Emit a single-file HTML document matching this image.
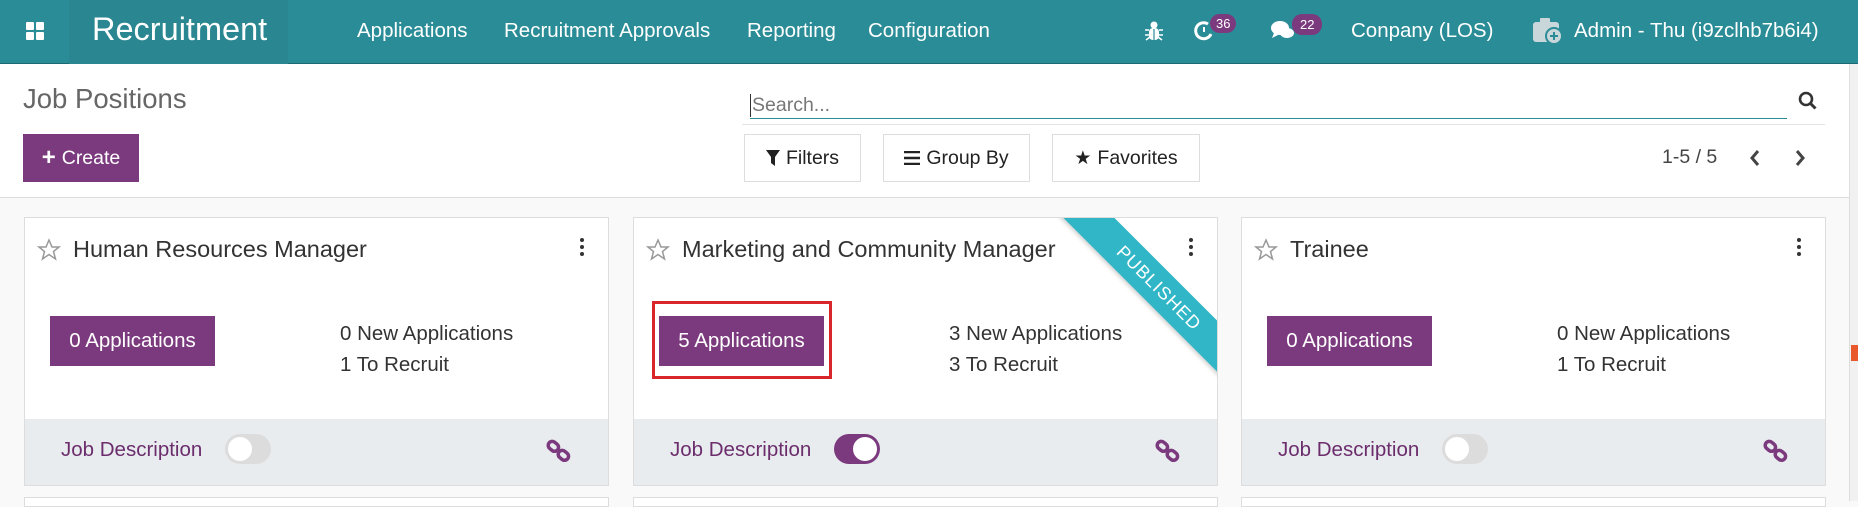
<!DOCTYPE html>
<html><head><meta charset="utf-8"><style>
*{box-sizing:border-box;margin:0;padding:0}
body{width:1858px;height:501px;overflow:hidden;background:#f9f9f9;font-family:"Liberation Sans",sans-serif;position:relative;color:#4c4c4c}
.abs{position:absolute}
.nav{left:0;top:0;width:1858px;height:64px;background:#2a8c96;border-bottom:1px solid #1f6a72}
.nav .t{color:#fff;font-size:20.5px;top:19px;white-space:nowrap}
.cp{left:0;top:64px;width:1849px;height:134px;background:#fff;border-bottom:1px solid #ddd}
.btn{border:1px solid #ddd;background:#fff;height:48px;top:134px;font-size:19.5px;color:#222;display:flex;align-items:center;justify-content:center;gap:6px}
.card{background:#fff;border:1px solid #ddd;top:217px;width:585px;height:269px;overflow:hidden}
.card .foot{position:absolute;left:0;bottom:0;width:100%;height:66px;background:#e9ecef}
.title{position:absolute;left:48px;top:18px;font-size:23.5px;color:#333;white-space:nowrap}
.star{position:absolute;left:12px;top:20px}
.kb{position:absolute;right:24px;top:20px;width:4px}
.kb i{display:block;width:4px;height:4px;background:#333;border-radius:2px;margin-bottom:3px}
.apps{position:absolute;left:25px;top:98px;width:165px;height:50px;background:#7c3a7e;color:#fff;font-size:20.5px;display:flex;align-items:center;justify-content:center}
.stat{position:absolute;left:315px;top:100px;font-size:20.5px;color:#333;line-height:31px}
.jd{position:absolute;left:36px;top:19px;font-size:20.5px;color:#6b2d6c}
.tg{position:absolute;left:200px;top:15px;width:46px;height:30px;border-radius:15px;background:#dcdcdc}
.tg i{position:absolute;left:3px;top:3px;width:24px;height:24px;border-radius:12px;background:#fff}
.tg.on{background:#7c3a7e}.tg.on i{left:19px}
.lk{position:absolute;right:36px;top:20px}
.badge{background:#7c3a7e;color:#fff;font-size:13px;border-radius:10px;padding:2px 6px}
</style></head><body>
<div class="abs nav">
  <div class="abs" style="left:26px;top:22px;width:18px;height:18px;display:grid;grid-template-columns:8px 8px;gap:2px"><i style="background:#fff;border-radius:1px"></i><i style="background:#fff;border-radius:1px"></i><i style="background:#fff;border-radius:1px"></i><i style="background:#fff;border-radius:1px"></i></div>
  <div class="abs" style="left:69px;top:0;width:219px;height:64px;background:#2a8690"></div>
  <div class="abs t" style="left:92px;top:11px;font-size:32.5px">Recruitment</div>
  <div class="abs t" style="left:357px">Applications</div>
  <div class="abs t" style="left:504px">Recruitment Approvals</div>
  <div class="abs t" style="left:747px">Reporting</div>
  <div class="abs t" style="left:868px">Configuration</div>
  <svg class="abs" style="left:1144px;top:20px" width="20" height="22" viewBox="0 0 20 22"><circle cx="10" cy="5" r="3.5" fill="#fff"/><rect x="5" y="8" width="10" height="12" rx="4" fill="#fff"/><path d="M1 10h4M15 10h4M1 15h4M15 15h4M2 20l4-3M18 20l-4-3" stroke="#fff" stroke-width="1.6"/><path d="M10 9v11" stroke="#2a8c96" stroke-width="1.2"/></svg>
  <svg class="abs" style="left:1193px;top:20px" width="22" height="22" viewBox="0 0 22 22"><path d="M15 4A8 8 0 1 0 18 14" stroke="#fff" stroke-width="3" fill="none"/><path d="M11 7v5" stroke="#fff" stroke-width="2"/></svg>
  <span class="abs badge" style="left:1210px;top:14px">36</span>
  <svg class="abs" style="left:1270px;top:19px" width="26" height="24" viewBox="0 0 26 24"><ellipse cx="10" cy="9" rx="9" ry="7" fill="#fff"/><path d="M4 14l-2 5 6-3z" fill="#fff"/><ellipse cx="17" cy="14" rx="7" ry="5" fill="#fff"/></svg>
  <span class="abs badge" style="left:1292px;top:14px;padding:3px 8px">22</span>
  <div class="abs t" style="left:1351px">Conpany (LOS)</div>
  <svg class="abs" style="left:1532px;top:16px" width="32" height="30" viewBox="0 0 32 30"><rect x="1" y="6" width="26" height="20" rx="3" fill="#c9d7da"/><rect x="8" y="2" width="10" height="6" rx="1" fill="#c9d7da"/><circle cx="22" cy="20" r="8" fill="#c9d7da" stroke="#2a8c96" stroke-width="2"/><path d="M22 16v8M18 20h8" stroke="#2a8c96" stroke-width="2"/></svg>
  <div class="abs t" style="left:1574px">Admin - Thu (i9zclhb7b6i4)</div>
</div>
<div class="abs cp">
  <div class="abs" style="left:23px;top:19px;font-size:27.5px;color:#666">Job Positions</div>
  <div class="abs" style="left:750px;top:30px;font-size:19.5px;color:#777;border-left:1px solid #333;padding-left:1px">Search...</div>
  <div class="abs" style="left:750px;top:54px;width:1037px;height:1px;background:#2a8c96"></div>
  <div class="abs" style="left:742px;top:60px;width:1083px;height:1px;background:#e4e4e4"></div>
  <svg class="abs" style="left:1798px;top:27px" width="20" height="20" viewBox="0 0 20 20"><circle cx="8" cy="8" r="6" stroke="#333" stroke-width="2.6" fill="none"/><path d="M12.5 12.5l5 5" stroke="#333" stroke-width="3"/></svg>
  <div class="abs" style="left:1662px;top:82px;font-size:19.5px;color:#444">1-5 / 5</div>
  <svg class="abs" style="left:1748px;top:84px" width="14" height="20" viewBox="0 0 14 20"><path d="M10 3L4 10l6 7" stroke="#444" stroke-width="3" fill="none"/></svg>
  <svg class="abs" style="left:1793px;top:84px" width="14" height="20" viewBox="0 0 14 20"><path d="M4 3l6 7-6 7" stroke="#444" stroke-width="3" fill="none"/></svg>
</div>
<div class="abs" style="left:1849px;top:64px;width:9px;height:437px;background:#f1f1f1;border-left:1px solid #ddd"></div>
<div class="abs" style="left:1851px;top:345px;width:7px;height:16px;background:#e8582a"></div>
<div class="abs btn" style="left:23px;width:116px;background:#7c3a7e;border-color:#7c3a7e;color:#fff"><b style="font-size:24px">+</b>Create</div>
<div class="abs btn" style="left:744px;width:117px"><svg width="14" height="16" viewBox="0 0 14 16"><path d="M0 0h14L9 7v9L5 13V7z" fill="#222"/></svg>Filters</div>
<div class="abs btn" style="left:883px;width:147px"><svg width="16" height="14" viewBox="0 0 16 14"><path d="M0 1h16M0 7h16M0 13h16" stroke="#222" stroke-width="2.4"/></svg>Group By</div>
<div class="abs btn" style="left:1052px;width:148px"><span style="font-size:19px">★</span>Favorites</div>

<div class="abs card" style="left:24px">
  <svg class="star" width="24" height="24" viewBox="0 0 24 24"><path d="M12 2l3 7h7l-5.5 4.5 2 7.5L12 16.5 5.5 21l2-7.5L2 9h7z" fill="none" stroke="#999" stroke-width="1.5"/></svg>
  <div class="title">Human Resources Manager</div><div class="kb"><i></i><i></i><i></i></div>
  <div class="apps">0 Applications</div>
  <div class="stat">0 New Applications<br>1 To Recruit</div>
  <div class="foot"><div class="jd">Job Description</div><div class="tg"><i></i></div>
  <svg class="lk" width="26" height="24" viewBox="0 0 26 24"><g fill="none" stroke="#7c3a7e" stroke-width="3.5"><rect x="2" y="3" width="11" height="8" rx="4" transform="rotate(40 7 7)"/><rect x="12" y="12" width="11" height="8" rx="4" transform="rotate(40 17 16)"/></g></svg></div>
</div>
<div class="abs card" style="left:633px">
  <svg class="star" width="24" height="24" viewBox="0 0 24 24"><path d="M12 2l3 7h7l-5.5 4.5 2 7.5L12 16.5 5.5 21l2-7.5L2 9h7z" fill="none" stroke="#999" stroke-width="1.5"/></svg>
  <div class="title">Marketing and Community Manager</div><div class="kb"><i></i><i></i><i></i></div>
  <div style="position:absolute;left:18px;top:83px;width:180px;height:78px;border:3px solid #d9262b"></div>
  <div class="apps">5 Applications</div>
  <div class="stat">3 New Applications<br>3 To Recruit</div>
  <div style="position:absolute;left:400px;top:52px;width:250px;height:36px;background:#30b6c7;color:#fff;font-size:18px;letter-spacing:1px;text-align:center;line-height:36px;transform:rotate(45deg);box-shadow:0 2px 4px rgba(0,0,0,.2)">PUBLISHED</div>
  <div class="foot"><div class="jd">Job Description</div><div class="tg on"><i></i></div>
  <svg class="lk" width="26" height="24" viewBox="0 0 26 24"><g fill="none" stroke="#7c3a7e" stroke-width="3.5"><rect x="2" y="3" width="11" height="8" rx="4" transform="rotate(40 7 7)"/><rect x="12" y="12" width="11" height="8" rx="4" transform="rotate(40 17 16)"/></g></svg></div>
</div>
<div class="abs card" style="left:1241px">
  <svg class="star" width="24" height="24" viewBox="0 0 24 24"><path d="M12 2l3 7h7l-5.5 4.5 2 7.5L12 16.5 5.5 21l2-7.5L2 9h7z" fill="none" stroke="#999" stroke-width="1.5"/></svg>
  <div class="title">Trainee</div><div class="kb"><i></i><i></i><i></i></div>
  <div class="apps">0 Applications</div>
  <div class="stat">0 New Applications<br>1 To Recruit</div>
  <div class="foot"><div class="jd">Job Description</div><div class="tg"><i></i></div>
  <svg class="lk" width="26" height="24" viewBox="0 0 26 24"><g fill="none" stroke="#7c3a7e" stroke-width="3.5"><rect x="2" y="3" width="11" height="8" rx="4" transform="rotate(40 7 7)"/><rect x="12" y="12" width="11" height="8" rx="4" transform="rotate(40 17 16)"/></g></svg></div>
</div>
<div class="abs" style="left:24px;top:497px;width:585px;height:10px;background:#fff;border:1px solid #ddd"></div>
<div class="abs" style="left:633px;top:497px;width:585px;height:10px;background:#fff;border:1px solid #ddd"></div>
<div class="abs" style="left:1241px;top:497px;width:585px;height:10px;background:#fff;border:1px solid #ddd"></div>
</body></html>
